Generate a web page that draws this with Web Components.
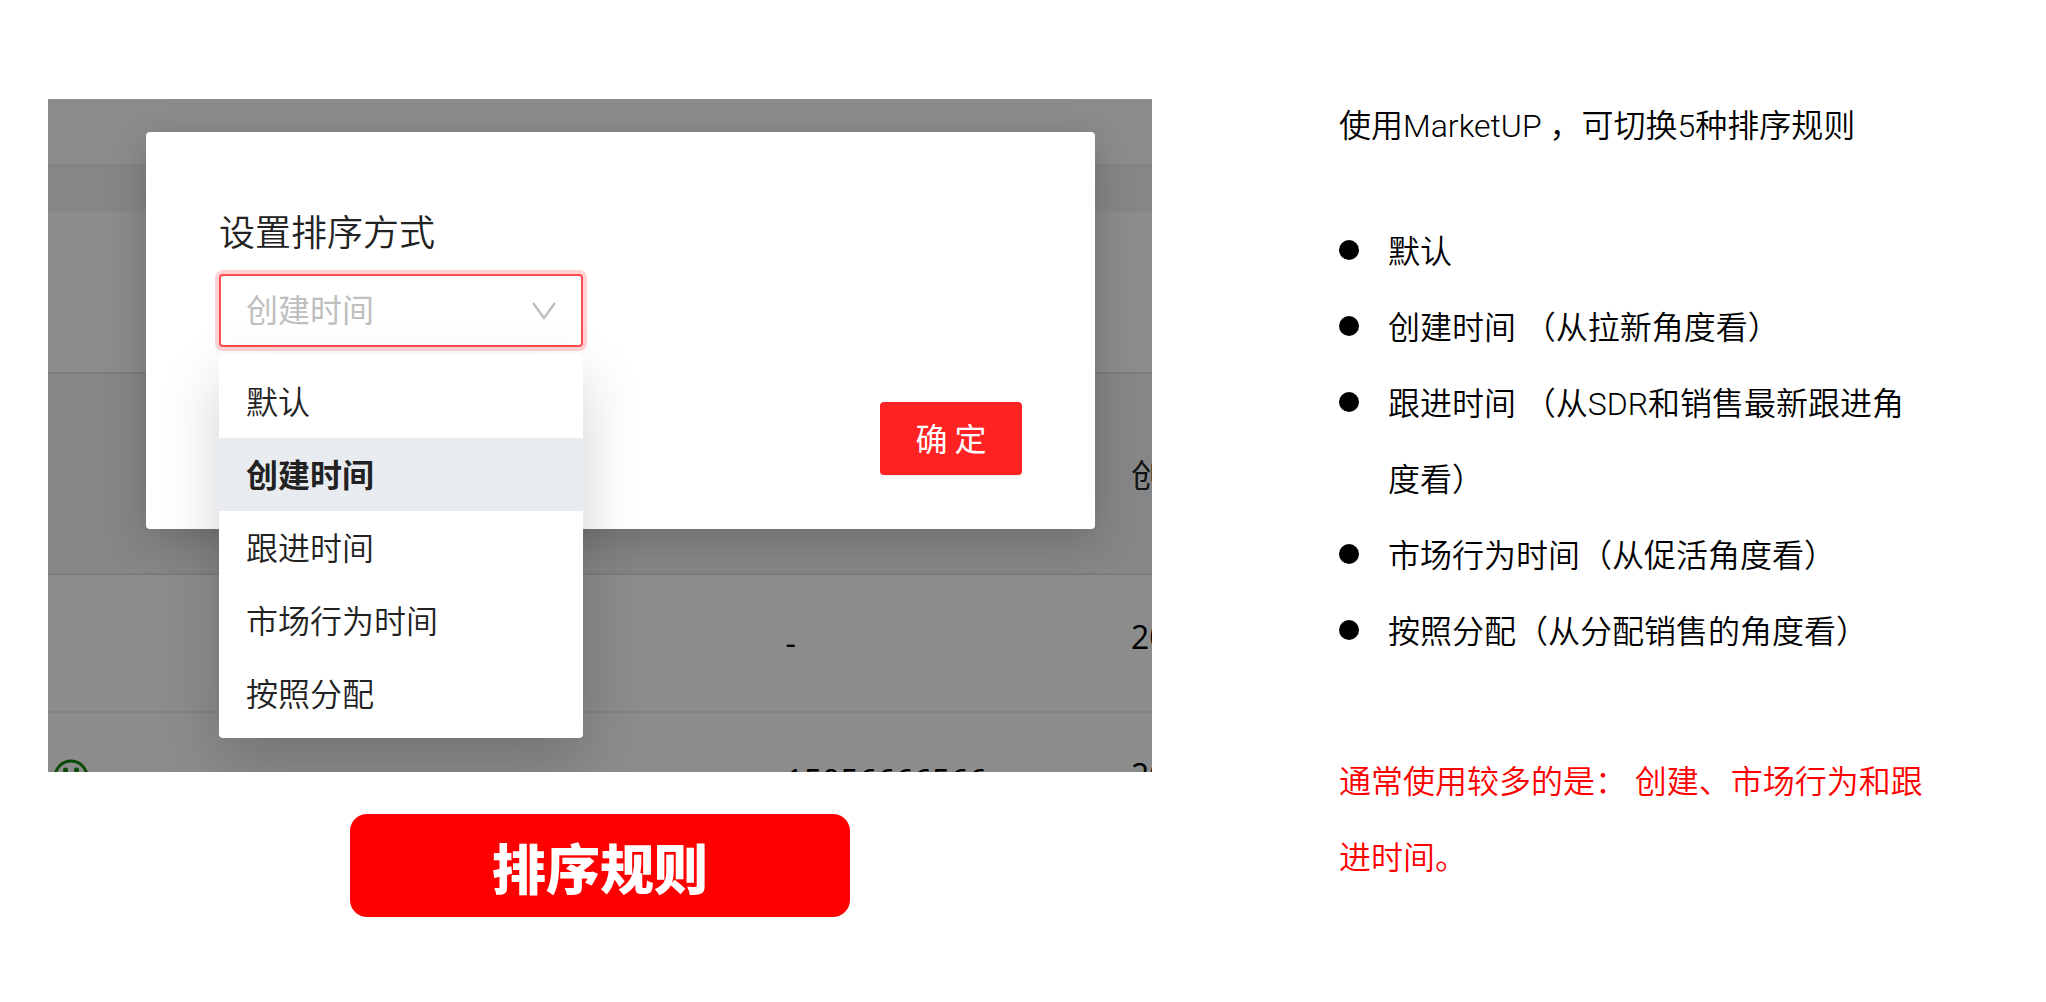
<!DOCTYPE html>
<html lang="zh-CN">
<head>
<meta charset="utf-8">
<title>排序规则</title>
<style>
  body { margin: 0; background: #fff; color: #000; font-family: "Noto Sans CJK SC", sans-serif; }
</style>
</head>
<body>
<sort-page>
  <sort-figure slot="figure"></sort-figure>
  <figure-caption slot="figure">排序规则</figure-caption>
  <rule-notes slot="notes"></rule-notes>
</sort-page>

<template id="sort-page">
  <style>
    :host { display: grid; grid-template-columns: 1104fr 590fr; column-gap: 187px; padding: 88px 117px 84px 48px; align-items: start; }
    .left { display: flex; flex-direction: column; align-items: center; gap: 42px; padding-top: 11px; min-width: 0; }
  </style>
  <div class="left"><slot name="figure"></slot></div>
  <slot name="notes"></slot>
</template>

<template id="figure-caption">
  <style>
    :host { display: block; padding: 13px 142px 11px; border-radius: 17px; background: #f00; color: #fff; font-size: 54px; line-height: 79px; font-weight: 900; }
  </style>
  <slot></slot>
</template>

<template id="rule-notes">
  <style>
    :host { display: block; font-family: Roboto, "Noto Sans CJK SC DemiLight", "Noto Sans CJK SC", sans-serif; font-weight: 300; font-size: 32px; line-height: 76px; }
    p, ul { margin: 0; padding: 0; }
    ul { list-style: none; padding: 50px 0 74px; }
    li { display: flex; gap: 29px; }
    li::before { content: ""; flex: none; width: 20px; height: 20px; margin-top: 26px; border-radius: 50%; background: #000; }
    .hint { color: #f00; }
  </style>
  <p>使用MarketUP ，可切换5种排序规则</p>
  <ul>
    <li>默认</li>
    <li>创建时间 （从拉新角度看）</li>
    <li>跟进时间 （从SDR和销售最新跟进角度看）</li>
    <li>市场行为时间（从促活角度看）</li>
    <li>按照分配（从分配销售的角度看）</li>
  </ul>
  <p class="hint">通常使用较多的是： 创建、市场行为和跟进时间。</p>
</template>

<template id="sort-figure">
  <style>
    :host { display: block; position: relative; width: 100%; height: 673px; overflow: hidden; }
    .mask { position: absolute; inset: 0; display: flex; justify-content: center; align-items: flex-start; padding: 33px 57px 0 98px; background: rgba(0, 0, 0, .45); }
  </style>
  <lead-table></lead-table>
  <div class="mask"><sort-dialog></sort-dialog></div>
</template>

<template id="lead-table">
  <style>
    :host { display: block; background: #fff; font-size: 32px; line-height: 48px; color: #222; }
    .top { height: 65px; border-bottom: 1px solid #e6e9ed; }
    .band { height: 47px; background: #f0f4f7; }
    .space { height: 160px; }
    table { width: 100%; table-layout: fixed; border-collapse: collapse; }
    th, td { padding: 0; text-align: left; font-weight: 400; white-space: nowrap; overflow: hidden; vertical-align: middle; }
    th { padding-bottom: 2px; }
    tr { box-sizing: border-box; height: 138px; border-bottom: 2px solid #f0f0f0; }
    thead tr { height: 201px; background: #f0f4f7; border-top: 2px solid #dfe2e6; border-bottom: 2px solid #dfe2e6; }
    td:last-child { padding-bottom: 12px; }
    td { font-family: "Open Sans", sans-serif; color: #000; }
    td:first-child { padding: 0 0 8px 5px; }
    .c1 { width: 66.8%; } .c2 { width: 31.3%; }
    svg { display: block; }
  </style>
  <div class="top"></div>
  <div class="band"></div>
  <div class="space"></div>
  <table>
    <colgroup><col class="c1"><col class="c2"><col></colgroup>
    <thead><tr><th></th><th></th><th>创</th></tr></thead>
    <tbody>
      <tr><td></td><td>-</td><td>20</td></tr>
      <tr>
        <td><svg width="36" height="36" viewBox="0 0 36 36" fill="none" stroke="#0b8a0b" stroke-width="3"><circle cx="18" cy="18" r="16"/><path d="M10 21a8 7 0 0 0 16 0"/><g fill="#0b8a0b" stroke="none"><circle cx="12.500" cy="11" r="2.500"/><circle cx="23.500" cy="11" r="2.500"/></g></svg></td>
        <td>15056666566</td><td>20</td>
      </tr>
    </tbody>
  </table>
</template>

<template id="sort-dialog">
  <style>
    :host { display: flex; flex-direction: column; box-sizing: border-box; width: 100%; height: 397px; padding: 74px 73px 54px; border-radius: 4px; background: #fff; box-shadow: 0 10px 40px rgba(0, 0, 0, .2); }
    label { font-family: "Noto Sans CJK SC DemiLight", "Noto Sans CJK SC", sans-serif; font-weight: 350; font-size: 36px; line-height: 48px; color: #222; }
    .field { position: relative; width: 364px; margin-top: 20px; }
    button { align-self: flex-end; width: 142px; height: 73px; margin-top: auto; padding: 0 0 4px; border: 0; border-radius: 4px; background: #ff2222; color: #fff; font: 400 32px/48px "Noto Sans CJK SC", sans-serif; box-shadow: 0 4px 0 rgba(0, 0, 0, .04); }
    select { display: block; box-sizing: border-box; width: 100%; height: 73px; padding: 0 25px 5px; appearance: none; border: 2px solid #ff4d4f; border-radius: 4px; background: #fff; color: #bfbfbf; font: 400 32px/48px "Noto Sans CJK SC", sans-serif; opacity: 1; box-shadow: 0 0 0 4px rgba(255, 34, 34, .2); }
    svg { position: absolute; right: 26px; top: 28px; }
    option-menu { position: absolute; left: 0; right: 0; top: 80px; }
  </style>
  <label for="sort">设置排序方式</label>
  <div class="field">
    <select id="sort"><option>创建时间</option></select>
    <svg width="26" height="20" viewBox="0 0 26 20" fill="none" stroke="#bfbfbf" stroke-width="2.500"><path d="M2 1l11 15L24 1"/></svg>
    <option-menu></option-menu>
  </div>
  <button type="button">确 定</button>
</template>

<template id="option-menu">
  <style>
    :host { display: block; padding: 11px 0 8px; border-radius: 4px; background: #fff; box-shadow: 0 24px 60px rgba(0, 0, 0, .18); font-family: "Noto Sans CJK SC DemiLight", "Noto Sans CJK SC", sans-serif; font-weight: 350; font-size: 32px; line-height: 70px; color: #222; }
    ul { margin: 0; padding: 0; list-style: none; }
    li { padding: 0 27px 3px; }
    .on { background: #e8ecf1; font-family: "Noto Sans CJK SC", sans-serif; font-weight: 700; }
  </style>
  <ul role="listbox">
    <li role="option">默认</li>
    <li role="option" class="on" aria-selected="true">创建时间</li>
    <li role="option">跟进时间</li>
    <li role="option">市场行为时间</li>
    <li role="option">按照分配</li>
  </ul>
</template>

<script>
  for (const name of ["option-menu", "sort-dialog", "lead-table", "sort-figure", "figure-caption", "rule-notes", "sort-page"]) {
    customElements.define(name, class extends HTMLElement {
      constructor() {
        super();
        this.attachShadow({ mode: "open" }).append(document.getElementById(name).content.cloneNode(true));
      }
    });
  }
</script>
</body>
</html>
